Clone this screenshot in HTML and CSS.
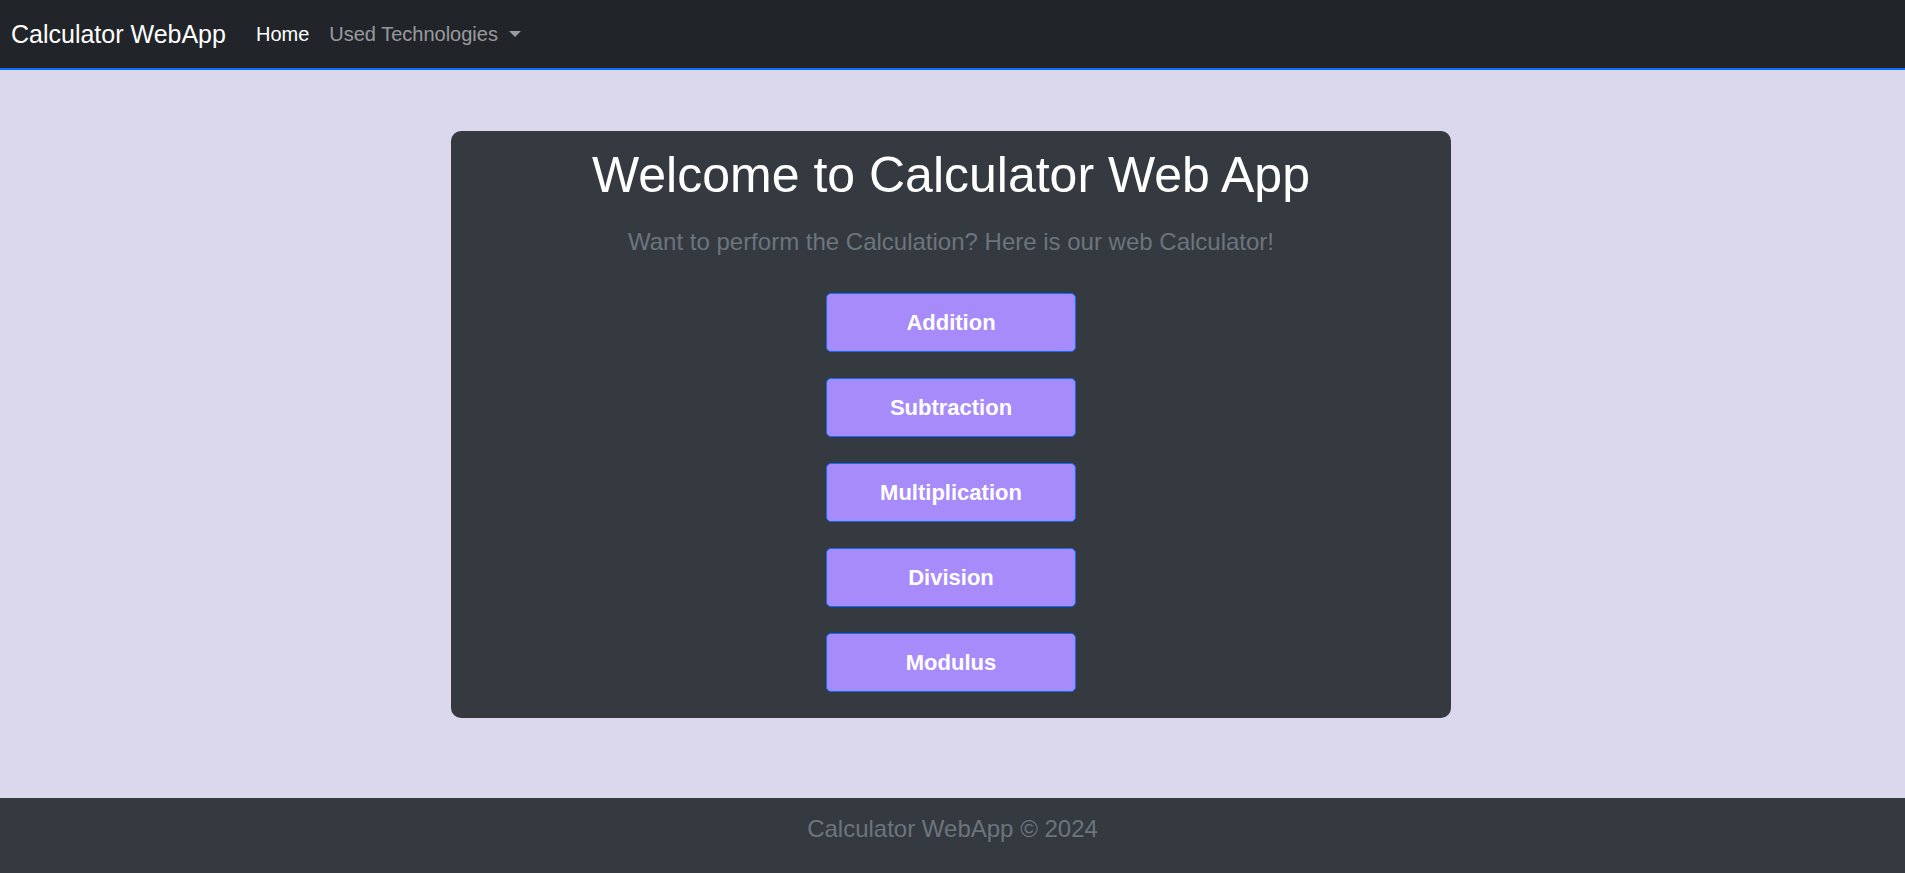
FILE: index.html
```html
<!DOCTYPE html>
<html lang="en">
<head>
<meta charset="utf-8">
<title>Calculator WebApp</title>
<link rel="stylesheet" href="styles.css">
</head>
<body>
<nav class="navbar">
  <a class="brand" href="#">Calculator WebApp</a>
  <ul class="nav">
    <li><a class="nav-link active" href="#">Home</a></li>
    <li><a class="nav-link dropdown" href="#">Used Technologies<span class="caret"></span></a></li>
  </ul>
</nav>
<main class="main">
  <section class="card">
    <h1 class="title">Welcome to Calculator Web App</h1>
    <p class="lead">Want to perform the Calculation? Here is our web Calculator!</p>
    <div class="ops">
      <button class="op">Addition</button>
      <button class="op">Subtraction</button>
      <button class="op">Multiplication</button>
      <button class="op">Division</button>
      <button class="op">Modulus</button>
    </div>
  </section>
</main>
<footer class="footer">
  <p>Calculator WebApp &copy; 2024</p>
</footer>
</body>
</html>
```

FILE: styles.css
```css
* { box-sizing: border-box; }
html, body { height: 100%; }
body {
  margin: 0;
  font-family: "Liberation Sans", Arial, sans-serif;
  background: #dbd7ec;
  display: flex;
  flex-direction: column;
  min-height: 100vh;
}
.navbar {
  height: 70px;
  background: #212529;
  border-bottom: 2px solid #0d6efd;
  display: flex;
  align-items: center;
  padding: 0 11px;
}
.brand {
  color: #fff;
  text-decoration: none;
  font-size: 25px;
  margin-right: 20px;
}
.nav {
  list-style: none;
  margin: 0;
  padding: 0;
  display: flex;
  align-items: center;
}
.nav-link {
  display: flex;
  align-items: center;
  padding: 0 10px;
  font-size: 20px;
  text-decoration: none;
  color: rgba(255, 255, 255, 0.55);
}
.nav-link.active { color: #fff; }
.caret {
  display: inline-block;
  margin-left: 11px;
  width: 0;
  height: 0;
  border-left: 6px solid transparent;
  border-right: 6px solid transparent;
  border-top: 6px solid rgba(255, 255, 255, 0.55);
}
.main {
  flex: 1;
  display: flex;
  flex-direction: column;
  align-items: center;
}
.card {
  width: 1000px;
  margin-top: 61px;
  margin-left: -3px;
  background: #343a40;
  border-radius: 10px;
  padding: 14px 0 26px;
  display: flex;
  flex-direction: column;
  align-items: center;
}
.title {
  margin: 0;
  font-size: 50px;
  font-weight: 400;
  line-height: 60px;
  color: #fff;
}
.lead {
  margin: 19px 0 0;
  font-size: 24px;
  line-height: 36px;
  color: #6c757d;
}
.ops {
  margin-top: 33px;
  display: flex;
  flex-direction: column;
  gap: 26px;
}
.op {
  width: 250px;
  height: 59px;
  background: #a78bfa;
  border: 1px solid #0d6efd;
  border-radius: 5px;
  color: #fff;
  font-family: "Liberation Sans", Arial, sans-serif;
  font-weight: 700;
  font-size: 22px;
  padding: 0;
  cursor: pointer;
}
.footer {
  height: 75px;
  background: #343a40;
  text-align: center;
  padding-top: 13px;
}
.footer p {
  margin: 0;
  font-size: 24px;
  line-height: 36px;
  color: #6c757d;
}
```
